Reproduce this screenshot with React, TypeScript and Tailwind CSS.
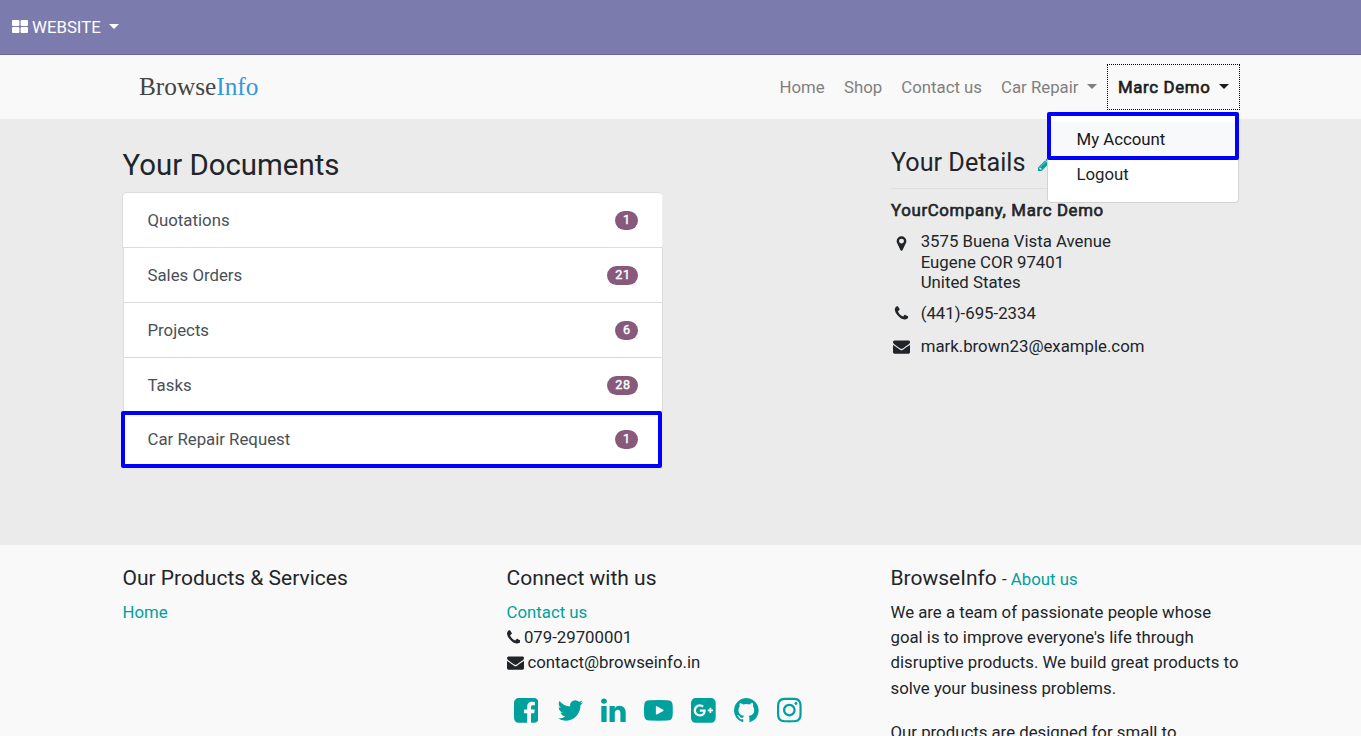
import type { ReactNode } from 'react';
import { FaInstagram } from 'react-icons/fa';

const paths = {
  phone:
    'M1600 1240q0 27-10 70.5t-21 68.5q-21 50-122 106-94 51-186 51-27 0-53-3.5t-57.5-12.5-47-14.5-55.5-20.5-49-18q-98-35-175-83-127-79-264-216t-216-264q-48-77-83-175-3-9-18-49t-20.5-55.5-14.5-47-12.5-57.5-3.5-53q0-92 51-186 56-101 106-122 25-11 68.5-21t70.5-10q14 0 21 3 18 6 53 76 11 19 30 54t35 63.5 31 53.5q3 4 17.5 25t21.5 35.5 7 28.5q0 20-28.5 50t-62 55-62 53-28.5 46q0 9 5 22.5t8.5 20.5 14 24 11.5 19q76 137 174 235t235 174q2 1 19 11.5t24 14 20.5 8.5 22.5 5q18 0 46-28.5t53-62 55-62 50-28.5q14 0 28.5 7t35.5 21.5 25 17.5q25 15 53.5 31t63.5 35 54 30q70 35 76 53 3 7 3 21z',
  envelope:
    'M1792 710v794q0 66-47 113t-113 47H160q-66 0-113-47T0 1504V710q44 49 101 87 362 246 497 345 57 42 92.5 65.5t94.5 48 110 24.5h2q51 0 110-24.5t94.5-48T1194 1142q170-123 498-345 57-39 100-87zm0-294q0 79-49 151t-122 123q-376 261-468 325-10 7-42.5 31t-54 38.5-52 32.5-57.5 27-50 9h-2q-23 0-50-9t-57.5-27-52-32.5-54-38.5-42.5-31q-91-64-262-182.5T172 690q-62-42-117-115.5T0 438q0-78 41.5-130T160 256h1472q65 0 112.5 47t47.5 113z',
  marker:
    'M1152 640q0-106-75-181t-181-75-181 75-75 181 75 181 181 75 181-75 75-181zm256 0q0 109-33 179l-364 774q-16 33-47.5 52t-67.5 19-67.5-19-46.5-52l-365-774q-33-70-33-179 0-212 150-362t362-150 362 150 150 362z',
  pencil:
    'M491 1536l91-91-235-235-91 91v107h128v128h107zm523-928q0-22-22-22-10 0-17 7l-542 542q-7 7-7 17 0 22 22 22 10 0 17-7l542-542q7-7 7-17zm-54-192l416 416-832 832H128v-416zm683 96q0 53-37 90l-166 166-416-416 166-165q36-38 90-38 53 0 91 38l235 234q37 39 37 91z',
  facebook:
    'M1376 128q119 0 203.5 84.5t84.5 203.5v960q0 119-84.5 203.5t-203.5 84.5h-188v-595h199l30-232h-229v-148q0-56 23.5-84t91.5-28l122-1v-207q-63-9-178-9-136 0-217.5 80t-81.5 226v171h-200v232h200v595h-532q-119 0-203.5-84.5t-84.5-203.5v-960q0-119 84.5-203.5t203.5-84.5h960z',
  twitter:
    'M1684 408q-67 98-162 167 1 14 1 42 0 130-38 259.5t-115.5 248.5-184.5 210.5-258 146-323 54.5q-271 0-496-145 35 4 78 4 225 0 401-138-105-2-188-64.5t-114-159.5q33 5 61 5 43 0 85-11-112-23-185.5-111.5t-73.5-205.5v-4q68 38 146 41-66-44-105-115t-39-154q0-88 44-163 121 149 294.5 238.5t371.5 99.5q-8-38-8-74 0-134 94.5-228.5t228.5-94.5q140 0 236 102 109-21 205-78-37 115-142 178 93-10 186-50z',
  linkedin:
    'M477 625v991h-330v-991h330zm21-306q1 73-50.5 122t-135.5 49h-2q-82 0-132-49t-50-122q0-74 51.5-122.5t134.5-48.5 133 48.5 51 122.5zm1166 729v568h-329v-530q0-105-40.5-164.5t-126.5-59.5q-63 0-105.5 34.5t-63.5 85.5q-11 30-11 81v553h-329q2-399 2-647t-1-296l-1-48h329v144h-2q20-32 41-56t56.5-52 87-43.5 114.5-15.5q171 0 275 113.5t104 332.5z',
  youtube:
    'M1219 896q0-26-24-40l-390-212q-24-14-45-2-21 12-21 38v432q0 26 21 38 21 12 45-2l390-212q24-14 24-40zM1792 896q0 96-1 150t-8.5 136.5-22.5 147.5q-16 73-69 123t-124 58q-222 25-671 25t-671-25q-71-8-124.5-58t-69.5-123q-14-65-21.5-147.5t-8.5-136.5-1-150 1-150 8.5-136.5 22.5-147.5q16-73 69-123t124-58q222-25 671-25t671 25q71 8 124.5 58t69.5 123q14 65 21.5 147.5t8.5 136.5 1 150z',
  googlePlus:
    'M1045 905q0-26-6-64h-362v132h217q-3 24-16.5 50t-37.5 53-66.5 44.5-96.5 17.5q-99 0-169-71t-70-171 70-171 169-71q92 0 153 59l104-101q-108-100-257-100-160 0-272 112.5t-112 271.5 112 271.5 272 112.5q165 0 266.5-105t101.5-270zm345 46h109v-110h-109v-110h-110v110h-110v110h110v110h110v-110zm274-535v960q0 119-84.5 203.5t-203.5 84.5h-960q-119 0-203.5-84.5t-84.5-203.5v-960q0-119 84.5-203.5t203.5-84.5h960q119 0 203.5 84.5t84.5 203.5z',
  github:
    'M896 128q209 0 385.5 103t279.5 279.5 103 385.5q0 251-146.5 451.5t-378.5 277.5q-27 5-40-7t-13-30q0-3 .5-76.5t.5-134.5q0-97-52-142 57-6 102.5-18t94-39 81-66.5 53-105 20.5-150.5q0-119-79-206 37-91-8-204-28-9-81 11t-92 44l-38 24q-93-26-192-26t-192 26q-16-11-42.5-27t-83.5-38.5-85-13.5q-45 113-8 204-79 87-79 206 0 85 20.5 150t52.5 105 80.5 67 94 39 102.5 18q-39 36-49 103-21 10-45 15t-57 5-65.5-21.5-55.5-62.5q-19-32-48.5-52t-49.5-24l-20-3q-21 0-29 4.5t-5 11.5 9 14 13 12l7 5q22 10 43.5 38t31.5 51l10 23q13 38 44 61.5t67 30 69.5 7 55.5-3.5l23-4q0 38 .5 88.5t.5 54.5q0 18-13 30t-40 7q-232-77-378.5-277.5t-146.5-451.5q0-209 103-385.5t279.5-279.5 385.5-103z',
};

function Icon({ name, viewBox = '0 0 1792 1792', className }: { name: keyof typeof paths; viewBox?: string; className: string }) {
  return (
    <svg viewBox={viewBox} fill="currentColor" fillRule="evenodd" className={`shrink-0 ${className}`} aria-hidden="true">
      <path d={paths[name]} />
    </svg>
  );
}

function Caret({ className = '' }: { className?: string }) {
  return (
    <svg viewBox="0 0 10 5" fill="currentColor" className={`mb-[2px] h-[5px] w-[10px] shrink-0 ${className}`} aria-hidden="true">
      <path d="M0 0h10L5 5z" />
    </svg>
  );
}

const documents = [
  { label: 'Quotations', count: 1 },
  { label: 'Sales Orders', count: 21 },
  { label: 'Projects', count: 6 },
  { label: 'Tasks', count: 28 },
  { label: 'Car Repair Request', count: 1 },
];

const rowStyles = [
  'h-[56px] rounded-t-[5px] border border-r-[#efefef] border-[#dcdcdc] pl-[24.5px]',
  'ml-px h-[55px] border-x border-b border-[#dcdcdc] pl-[23.5px]',
  'ml-px h-[55px] border-x border-b border-[#dcdcdc] pl-[23.5px]',
  'ml-px h-[54px] border-x border-[#dcdcdc] pl-[23.5px]',
];

function Badge({ children }: { children: ReactNode }) {
  return (
    <span className="flex h-[19px] items-center rounded-full bg-[#875a7b] pr-[7.4px] pl-[8px] text-[12.6px] leading-none tracking-[0.6px] text-white [-webkit-text-stroke:0.4px]">
      {children}
    </span>
  );
}

function Header() {
  return (
    <>
      <div className="flex h-[55px] items-center border-b border-[#6a67a0] bg-[#7c7bad] pl-3 text-[16.8px] text-white">
        <svg viewBox="0 0 16 13" fill="currentColor" className="mr-1 mb-px h-[13px] w-4" aria-hidden="true">
          <rect width="7.4" height="6" rx="1" />
          <rect x="8.6" width="7.4" height="6" rx="1" />
          <rect y="7" width="7.4" height="6" rx="1" />
          <rect x="8.6" y="7" width="7.4" height="6" rx="1" />
        </svg>
        <span className="pt-[2px]">WEBSITE</span>
        <Caret className="ml-[8px]" />
      </div>
      <header className="h-16 bg-[#f9f9f9]">
        <div className="mx-auto flex h-full w-[1117px] items-center justify-between">
          <div className="pl-[17px] font-['Liberation_Serif',serif] text-[25.3px] text-[#444]">
            Browse<span className="text-[#3498db]">Info</span>
          </div>
          <nav className="flex items-center text-[16.8px] text-[#7f7f7f]">
            <a className="mr-[19.5px] pt-[2px]">Home</a>
            <a className="mr-[19px] pt-[2px]">Shop</a>
            <a className="mr-[19px] pt-[2px]">Contact us</a>
            <a className="mr-[10.5px] flex items-center">
              <span className="pt-[2px]">Car Repair</span>
              <Caret className="ml-[8px]" />
            </a>
            <div className="relative -mr-[1px] flex h-[46px] w-[133px] items-center border border-dotted border-black pl-[10px] text-[#1c1c1c]">
              <span className="pt-[2px] whitespace-nowrap tracking-[0.67px] [-webkit-text-stroke:0.65px]">Marc Demo</span>
              <Caret className="ml-[8px]" />
              <div className="absolute top-[47px] right-0 z-10 h-[91px] w-[192px] rounded border border-[#d2d2d2] bg-white text-[16.8px] text-[#212529]">
                <div className="-mt-px -ml-px flex h-[48px] w-[192px] flex-col rounded-[2px] border-4 border-[#0000ff] bg-white pt-[6px]">
                  <div className="flex h-[34px] items-center bg-[#f8f9fa] pt-[2px] pl-[25.5px] text-[#16181b]">My Account</div>
                </div>
                <div className="flex h-[30px] items-center pl-[28.5px]">Logout</div>
              </div>
            </div>
          </nav>
        </div>
      </header>
    </>
  );
}

function Documents() {
  return (
    <section className="w-[541px]">
      <h3 className="mt-[29px] h-[44px] pl-[0.5px] text-[29.4px] leading-[35px]">Your Documents</h3>
      <ul className="text-[16.8px] text-[#495057]">
        {documents.slice(0, 4).map((doc, i) => (
          <li key={doc.label} className={`flex items-center justify-between bg-white pr-6 ${rowStyles[i]}`}>
            <span className="pt-[2px]">{doc.label}</span>
            <Badge>{doc.count}</Badge>
          </li>
        ))}
        <li className="-mt-px -ml-[1px] flex h-[57px] w-[541px] items-center justify-between rounded-[2px] border-4 border-[#0000ff] bg-white pr-5 pl-[22.5px]">
          <span>{documents[4].label}</span>
          <Badge>{documents[4].count}</Badge>
        </li>
      </ul>
    </section>
  );
}

function Details() {
  return (
    <section className="w-[348px] text-[16.8px]">
      <h4 className="mt-[25px] flex h-[45px] items-center border-b border-[#dfdfdf] pb-[7px] text-[25.2px]">
        Your Details
        <Icon name="pencil" className="mt-[3px] ml-[12px] h-[15px] w-[15px] text-[#00a09d]" />
      </h4>
      <p className="mt-[9px] leading-[25px] tracking-[0.67px] [-webkit-text-stroke:0.65px]">YourCompany, Marc Demo</p>
      <div className="mt-[8px] flex">
        <div className="flex w-[29.7px] pt-[4px] pl-[2px]">
          <Icon name="marker" className="h-[17px] w-[17px]" />
        </div>
        <p className="leading-[20.6px]">
          3575 Buena Vista Avenue
          <br />
          Eugene COR 97401
          <br />
          United States
        </p>
      </div>
      <div className="mt-[8px] flex h-[25px] items-center">
        <div className="w-[29.7px] pl-[2px]">
          <Icon name="phone" className="h-[17px] w-[17px]" />
        </div>
        (441)-695-2334
      </div>
      <div className="mt-[8px] flex h-[25px] items-center">
        <div className="w-[29.7px] pl-[2px]">
          <Icon name="envelope" className="h-[17px] w-[17px]" />
        </div>
        mark.brown23@example.com
      </div>
    </section>
  );
}

function Footer() {
  return (
    <footer className="h-[191px] overflow-hidden bg-[#f9f9f9]">
      <div className="mx-auto grid w-[1116px] grid-cols-[384px_384px_348px] pt-[21px] text-[16.8px] leading-[25.2px]">
        <div>
          <h5 className="mb-[9px] text-[21px] leading-[25px]">Our Products &amp; Services</h5>
          <a className="text-[#00a09d]">Home</a>
        </div>
        <div>
          <h5 className="mb-[9px] text-[21px] leading-[25px]">Connect with us</h5>
          <a className="text-[#00a09d]">Contact us</a>
          <div className="flex items-center">
            <Icon name="phone" viewBox="192 0 1408 1792" className="mr-[4px] mb-px h-[17px] w-[13.4px]" />
            079-29700001
          </div>
          <div className="flex items-center">
            <Icon name="envelope" className="mr-[4px] mb-[2px] h-[17px] w-[17px]" />
            contact@browseinfo.in
          </div>
          <div className="mt-[20px] flex h-[29px] items-center gap-[18.2px] pl-[7.2px] text-[#00a09d]">
            <Icon name="facebook" viewBox="128 0 1536 1792" className="h-[28.8px] w-[24.7px]" />
            <Icon name="twitter" viewBox="64 0 1664 1792" className="h-[28.8px] w-[26.7px]" />
            <Icon name="linkedin" viewBox="128 0 1536 1792" className="h-[28.8px] w-[24.7px]" />
            <Icon name="youtube" className="h-[28.8px] w-[28.8px]" />
            <Icon name="googlePlus" viewBox="128 0 1536 1792" className="h-[28.8px] w-[24.7px]" />
            <Icon name="github" viewBox="128 0 1536 1792" className="h-[28.8px] w-[24.7px]" />
            <FaInstagram className="h-[28.2px] w-[24.7px] shrink-0" />
          </div>
        </div>
        <div className="w-[350px]">
          <h5 className="mb-[8px] text-[21px] leading-[25px]">
            BrowseInfo<span className="ml-[1px] text-[16.8px]"> - <a className="text-[#00a09d]">About us</a></span>
          </h5>
          <p>
            We are a team of passionate people whose
            <br />
            goal is to improve everyone's life through
            <br />
            disruptive products. We build great products to
            <br />
            solve your business problems.
          </p>
          <p className="mt-[19px]">Our products are designed for small to</p>
        </div>
      </div>
    </footer>
  );
}

export default function App() {
  return (
    <div className="h-[736px] overflow-hidden bg-[#ebebeb] font-[Roboto,sans-serif] text-[#212529]">
      <Header />
      <main className="h-[426px]">
        <div className="mx-auto flex w-[1117px] justify-between">
          <Documents />
          <Details />
        </div>
      </main>
      <Footer />
    </div>
  );
}
